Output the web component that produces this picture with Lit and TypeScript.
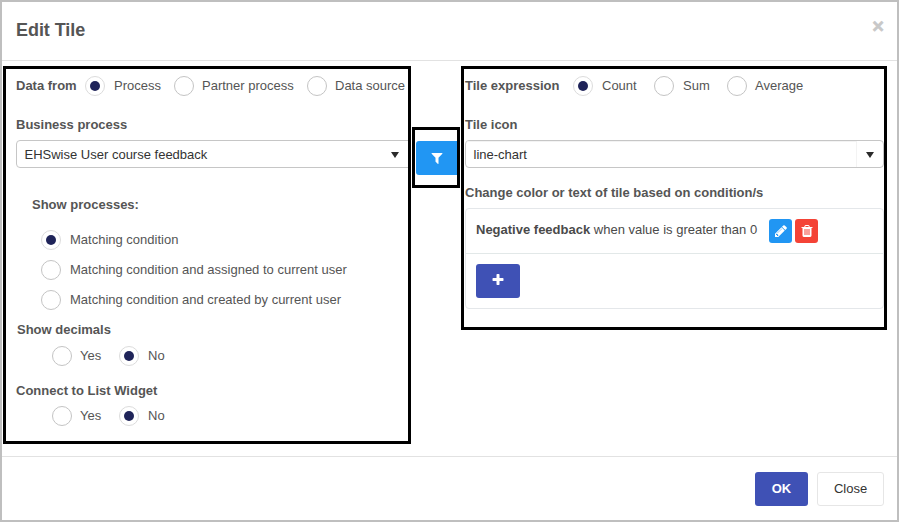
import { LitElement, html, css, svg } from "lit";
import { customElement, property } from "lit/decorators.js";
import { classMap } from "lit/directives/class-map.js";

const ICONS: Record<string, string> = {
  filter:
    "M1595 295q17 41-14 70l-493 493v742q0 42-39 59-13 5-25 5-27 0-45-19l-256-256q-19-19-19-45v-486l-493-493q-31-29-14-70 17-39 59-39h1280q42 0 59 39z",
  plus: "M1600 736v192q0 40-28 68t-68 28h-416v416q0 40-28 68t-68 28h-192q-40 0-68-28t-28-68v-416h-416q-40 0-68-28t-28-68v-192q0-40 28-68t68-28h416v-416q0-40 28-68t68-28h192q40 0 68 28t28 68v416h416q40 0 68 28t28 68z",
  pencil:
    "M491 1536l91-91-235-235-91 91v107h128v128h107zm523-928q0-22-22-22-10 0-17 7l-542 542q-7 7-7 17 0 22 22 22 10 0 17-7l542-542q7-7 7-17zm-54-192l416 416-832 832h-416v-416zm683 96q0 53-37 90l-166 166-416-416 166-165q36-38 90-38 53 0 91 38l235 234q37 39 37 91z",
  trash:
    "M704 1376v-704q0-14-9-23t-23-9h-64q-14 0-23 9t-9 23v704q0 14 9 23t23 9h64q14 0 23-9t9-23zm256 0v-704q0-14-9-23t-23-9h-64q-14 0-23 9t-9 23v704q0 14 9 23t23 9h64q14 0 23-9t9-23zm256 0v-704q0-14-9-23t-23-9h-64q-14 0-23 9t-9 23v704q0 14 9 23t23 9h64q14 0 23-9t9-23zm-544-992h448l-48-117q-7-9-17-11h-317q-10 2-17 11zm928 32v64q0 14-9 23t-23 9h-96v948q0 83-47 143.5t-113 60.5h-832q-66 0-113-58.5t-47-141.5v-952h-96q-14 0-23-9t-9-23v-64q0-14 9-23t23-9h309l70-167q15-37 54-63t79-26h320q40 0 79 26t54 63l70 167h309q14 0 23 9t9 23z",
};

@customElement("tile-icon")
class TileIcon extends LitElement {
  @property() name = "plus";
  static styles = css`
    :host { display: block; width: 14px; height: 14px; }
    .glyph { display: block; width: 14px; height: 14px; fill: #fff; }
  `;
  render() {
    return html`<svg class="glyph" viewBox="0 0 1792 1792">${svg`<path d=${ICONS[this.name]}></path>`}</svg>`;
  }
}

@customElement("radio-option")
class RadioOption extends LitElement {
  @property() label = "";
  @property({ type: Boolean }) checked = false;
  @property({ type: Boolean, reflect: true }) tight = false;
  static styles = css`
    :host { display: flex; align-items: center; gap: 9px; height: 20px; white-space: nowrap; }
    :host([tight]) { gap: 8px; }
    .ring { box-sizing: border-box; flex: none; width: 20px; height: 20px; border: 1px solid #c4c4c4; border-radius: 50%; background: #fff; display: flex; align-items: center; justify-content: center; }
    .ring.on { border-color: #dcdcdc; }
    .dot { width: 10.5px; height: 10.5px; border-radius: 50%; background: #1f2459; }
    .text { line-height: 20px; }
  `;
  render() {
    return html`<span class=${classMap({ ring: true, on: this.checked })}>${this.checked ? html`<span class="dot"></span>` : null}</span><span class="text">${this.label}</span>`;
  }
}

@customElement("select-box")
class SelectBox extends LitElement {
  @property() value = "";
  @property({ type: Boolean }) divided = false;
  static styles = css`
    :host { box-sizing: border-box; display: flex; align-items: center; height: 28px; border: 1px solid #c6c6c6; border-radius: 4px; color: #333; background: #fff; }
    .value { box-sizing: border-box; flex: 1; height: 26px; margin-right: 9px; padding: 1px 0 0 7.5px; line-height: 26px; white-space: nowrap; }
    .divided { border-radius: 3px 0 0 3px; box-shadow: inset -1px 1px 0 #f3f3f3; }
    .arrow { flex: none; width: 8px; height: 6px; margin-right: 9px; margin-top: 2px; fill: #2b2b2b; }
  `;
  render() {
    return html`<span class=${classMap({ value: true, divided: this.divided })}>${this.value}</span><svg class="arrow" viewBox="0 0 8 6"><path d="M0 0h8L4 6z"></path></svg>`;
  }
}

@customElement("app-root")
class AppRoot extends LitElement {
  static styles = css`
    * { box-sizing: border-box; }
    :host { display: block; width: 899px; height: 522px; font: 13px/20px "Liberation Sans", Arial, sans-serif; color: #555; }
    .dialog { display: flex; flex-direction: column; height: 522px; border: 2px solid #bfbfbf; background: #fff; overflow: hidden; }
    .header { flex: none; height: 59px; border-bottom: 1px solid #e2e2e2; display: flex; justify-content: space-between; padding: 16px 13px 0 14px; }
    .title { font-size: 18px; line-height: 24px; font-weight: bold; letter-spacing: -0.05px; }
    .close-x { font-size: 20px; line-height: 16px; font-weight: bold; color: #c8c8c8; -webkit-text-stroke: 0.6px #c8c8c8; }
    .body { flex: 1; display: grid; grid-template-columns: 408px 48px 426px; column-gap: 1px; align-items: start; padding: 5px 0 0 1px; }
    .frame { border: 3px solid #000; }
    .source { height: 378px; padding: 7px 0 0 10px; }
    .filter { height: 61px; margin-top: 61px; padding: 11px 0 0 1px; }
    .expression { height: 264px; padding: 7px 0 0 1px; }
    .label { font-weight: bold; white-space: nowrap; }
    .options { display: grid; height: 20px; }
    .from { grid-template-columns: 69px 89px 133px 1fr; }
    .kind { grid-template-columns: 108px 81px 73px 1fr; }
    .yesno { grid-template-columns: 67px 67px; padding-left: 36px; }
    .field { margin-top: 19px; margin-bottom: 5px; }
    .source-select { margin-right: -4px; clip-path: inset(0 4px 0 0); padding-right: 3px; }
    .show { margin: 27px 0 15px 16px; }
    .stack { display: grid; gap: 10px; padding-left: 25px; }
    .decimals { margin: 10px 0 6px 1px; }
    .connect { margin: 15px 0 5px; }
    .btn { display: flex; align-items: center; justify-content: center; border-radius: 3px; height: 34px; }
    .btn-filter { width: 41px; padding-left: 1px; background: #2196f3; border-radius: 3px 0 0 3px; }
    .change { margin: 15px 0 5px; }
    .panel { height: 101px; border: 1px solid #e4e7ea; border-radius: 4px; }
    .rule { display: flex; height: 45px; border-bottom: 1px solid #e2e8e8; padding: 10px 0 0 10px; white-space: nowrap; }
    .rule-text { width: 293px; line-height: 22px; color: #4a4a4a; }
    .small { width: 23px; height: 24px; margin-right: 3px; padding-bottom: 1px; }
    .edit { background: #2196f3; }
    .remove { background: #f44336; }
    .add { width: 44px; margin: 10px 0 0 10px; padding-bottom: 2px; background: #3f51b5; }
    .footer { flex: none; height: 64px; border-top: 1px solid #e2e2e2; display: flex; justify-content: flex-end; gap: 9px; padding: 15px 13px 0 0; }
    .ok { width: 53px; background: #3f51b5; color: #fff; font-weight: bold; }
    .close { width: 67px; border: 1px solid #e6e6e6; color: #333; }
  `;
  render() {
    return html`<div class="dialog">
      <div class="header"><span class="title">Edit Tile</span><span class="close-x">×</span></div>
      <div class="body">
        <section class="frame source">
          <div class="options from">
            <span class="label">Data from</span>
            <radio-option label="Process" checked></radio-option>
            <radio-option label="Partner process" tight></radio-option>
            <radio-option label="Data source" tight></radio-option>
          </div>
          <div class="label field">Business process</div>
          <select-box class="source-select" value="EHSwise User course feedback"></select-box>
          <div class="label show">Show processes:</div>
          <div class="stack">
            <radio-option label="Matching condition" checked></radio-option>
            <radio-option label="Matching condition and assigned to current user"></radio-option>
            <radio-option label="Matching condition and created by current user"></radio-option>
          </div>
          <div class="label decimals">Show decimals</div>
          <div class="options yesno">
            <radio-option label="Yes" tight></radio-option><radio-option label="No" checked></radio-option>
          </div>
          <div class="label connect">Connect to List Widget</div>
          <div class="options yesno">
            <radio-option label="Yes" tight></radio-option><radio-option label="No" checked></radio-option>
          </div>
        </section>
        <section class="frame filter">
          <div class="btn btn-filter"><tile-icon name="filter"></tile-icon></div>
        </section>
        <section class="frame expression">
          <div class="options kind">
            <span class="label">Tile expression</span>
            <radio-option label="Count" checked></radio-option>
            <radio-option label="Sum"></radio-option>
            <radio-option label="Average" tight></radio-option>
          </div>
          <div class="label field">Tile icon</div>
          <select-box value="line-chart" divided></select-box>
          <div class="label change">Change color or text of tile based on condition/s</div>
          <div class="panel">
            <div class="rule">
              <span class="rule-text"><b>Negative feedback</b> when value is greater than 0</span>
              <div class="btn small edit"><tile-icon name="pencil"></tile-icon></div>
              <div class="btn small remove"><tile-icon name="trash"></tile-icon></div>
            </div>
            <div class="btn add"><tile-icon name="plus"></tile-icon></div>
          </div>
        </section>
      </div>
      <div class="footer"><div class="btn ok">OK</div><div class="btn close">Close</div></div>
    </div>`;
  }
}
